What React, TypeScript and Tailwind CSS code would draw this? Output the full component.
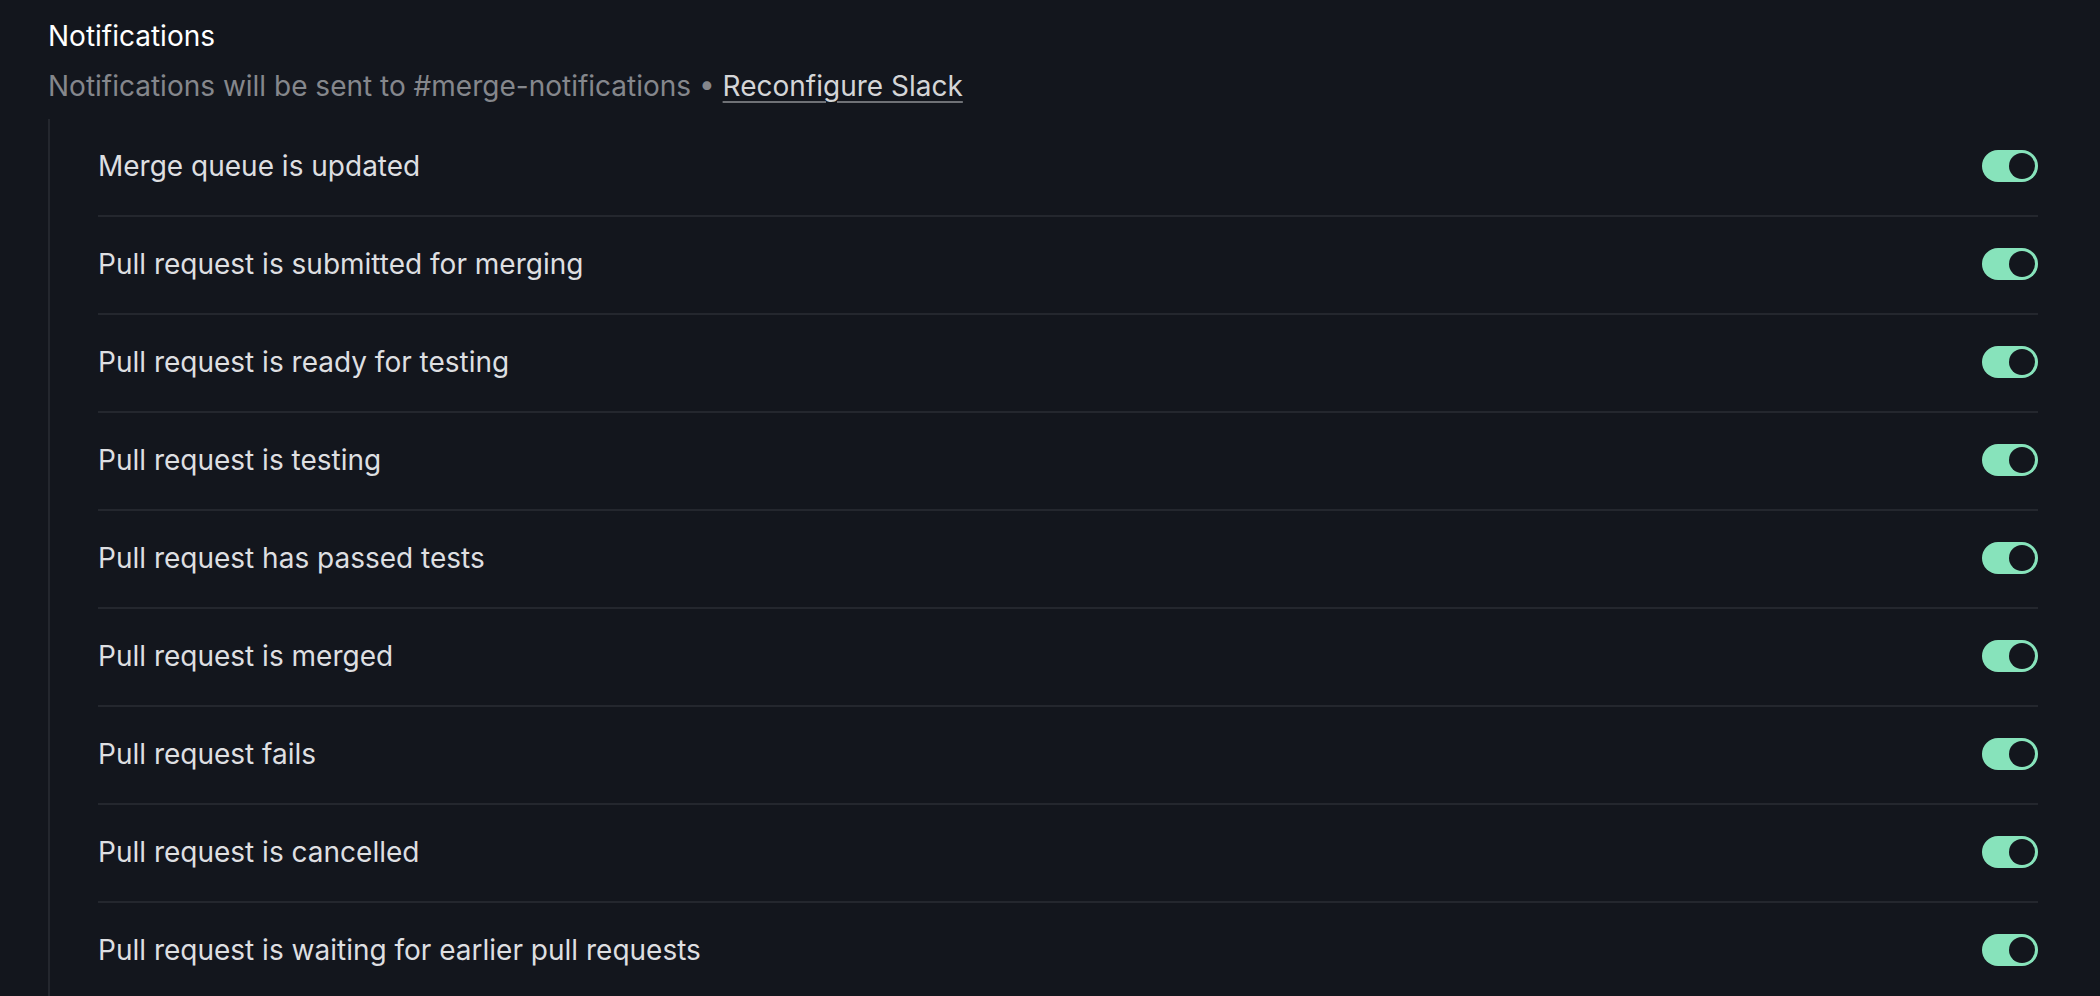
const events = [
  "Merge queue is updated",
  "Pull request is submitted for merging",
  "Pull request is ready for testing",
  "Pull request is testing",
  "Pull request has passed tests",
  "Pull request is merged",
  "Pull request fails",
  "Pull request is cancelled",
  "Pull request is waiting for earlier pull requests",
];

function Toggle() {
  return (
    <div className="flex h-[32px] w-[56px] shrink-0 items-center justify-end rounded-full bg-[#87e3bb] pr-[3px]">
      <div className="h-[26px] w-[26px] rounded-full bg-[#13161d]" />
    </div>
  );
}

export default function App() {
  return (
    <div
      className="min-h-screen overflow-hidden bg-[#13161d] pl-[48px] pr-[62px] pt-[18px] text-[28px]"
      style={{ fontFamily: "Inter, 'Noto Sans', sans-serif" }}
    >
      <h2 className="leading-[36px] text-white">Notifications</h2>
      <p className="mt-[14px] leading-[36px] text-[#85878c]">
        Notifications will be sent to #merge-notifications •{" "}
        <a className="text-[#d4d5d7] underline decoration-[#6f7176] decoration-[2px] underline-offset-[5px]">
          Reconfigure Slack
        </a>
      </p>
      <div className="mt-[15px] border-l-2 border-[#24272e] pl-[48px]">
        {events.map((label) => (
          <div
            key={label}
            className="flex h-[98px] items-center justify-between border-b-2 border-[#24272e] pb-[2px] text-[#dedfe1]"
          >
            <span>{label}</span>
            <Toggle />
          </div>
        ))}
      </div>
    </div>
  );
}
